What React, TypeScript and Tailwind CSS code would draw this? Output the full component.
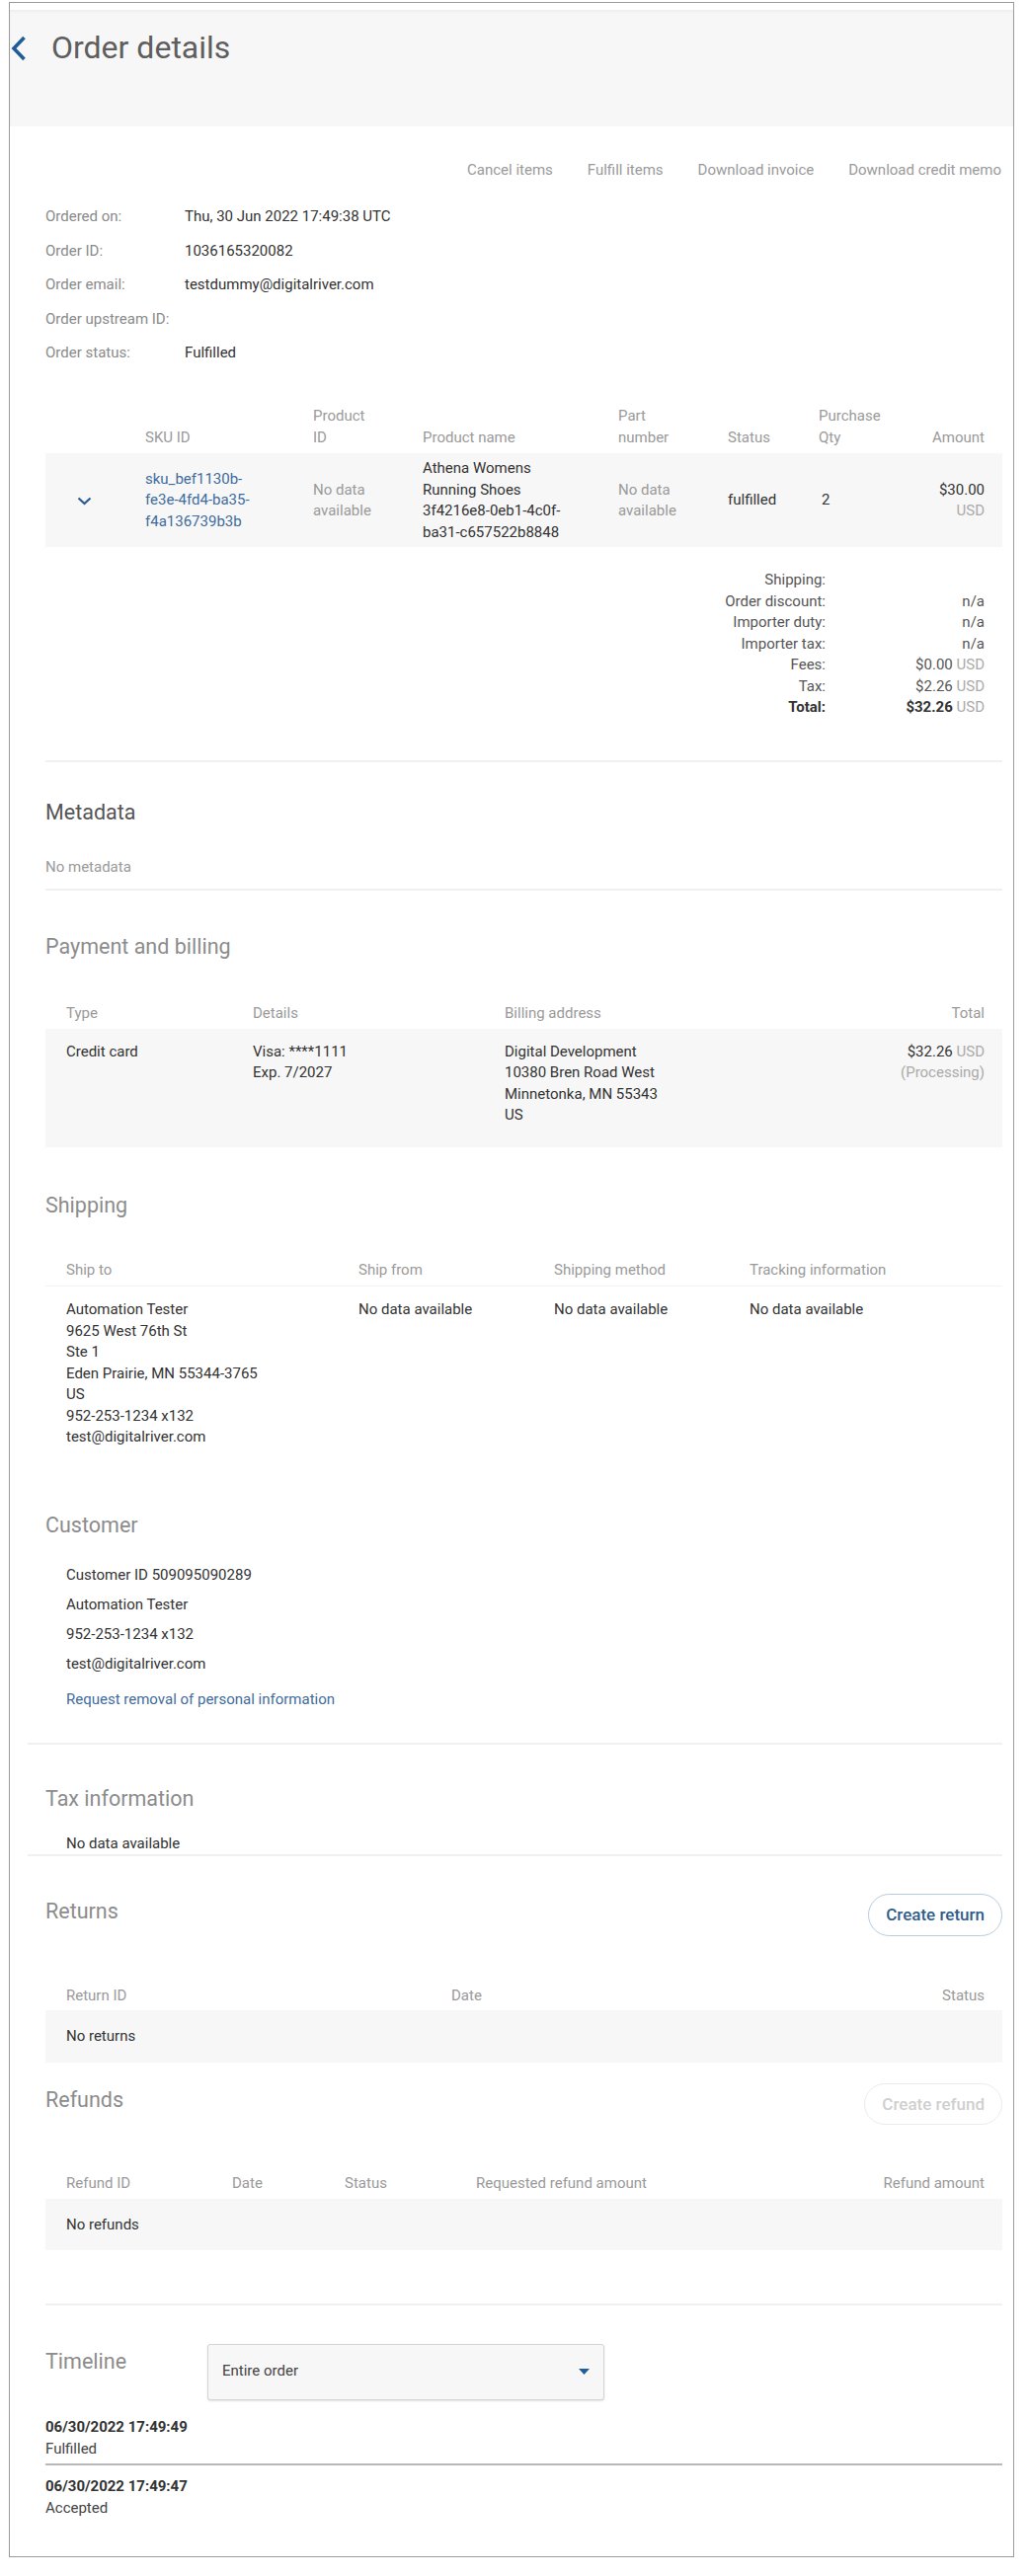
import React from 'react';

const font = { fontFamily: 'Roboto, "Liberation Sans", Arial, sans-serif' };

function Heading({ children, dark }: { children: React.ReactNode; dark?: boolean }) {
  return (
    <div className={`text-[21.5px] leading-[28px] ${dark ? 'text-[#555]' : 'text-[#8c8c8c]'}`}>{children}</div>
  );
}

function Divider({ wide, className = '' }: { wide?: boolean; className?: string }) {
  return <div className={`h-[2px] bg-[#f0f0f0] ${wide ? '-ml-[18px]' : ''} ${className}`} />;
}

function PillButton({ children, disabled }: { children: React.ReactNode; disabled?: boolean }) {
  return (
    <button
      type="button"
      className={`rounded-full border px-[17px] text-[17px] font-medium leading-none ${
        disabled
          ? 'h-[42px] border-[#ececec] text-[#cfcfcf]'
          : 'h-[43px] border-[#b7cbdf] text-[#2f5d8b]'
      }`}
    >
      {children}
    </button>
  );
}

const info: [string, string][] = [
  ['Ordered on:', 'Thu, 30 Jun 2022 17:49:38 UTC'],
  ['Order ID:', '1036165320082'],
  ['Order email:', 'testdummy@digitalriver.com'],
  ['Order upstream ID:', ''],
  ['Order status:', 'Fulfilled'],
];

const totals: [string, React.ReactNode][] = [
  ['Shipping:', ''],
  ['Order discount:', 'n/a'],
  ['Importer duty:', 'n/a'],
  ['Importer tax:', 'n/a'],
  ['Fees:', <>$0.00 <span className="text-[#aaa]">USD</span></>],
  ['Tax:', <>$2.26 <span className="text-[#aaa]">USD</span></>],
];

const itemCols = 'grid grid-cols-[101px_170px_111px_198px_111px_92px_1fr_auto]';

export default function App() {
  return (
    <div className="min-h-[2609px] w-[1041px] bg-white pt-[2px]" style={font}>
      <div className="ml-[9px] w-[1018px] border border-[#9c9c9c]">
        {/* page header */}
        <div className="mt-[7px] h-[118px] bg-[#f7f7f7] shadow-[inset_0_2px_3px_rgba(0,0,0,0.04)]">
          <div className="flex items-center pt-[18px]">
            <svg width="18" height="26" viewBox="0 0 18 26" className="mt-[2px]">
              <path d="M14.5 2 L4 13 L14.5 24" fill="none" stroke="#1f5c98" strokeWidth="3.6" />
            </svg>
            <h1 className="ml-[24px] text-[32px] leading-[40px] text-[#5e5e5e]">Order details</h1>
          </div>
        </div>

        <div className="pl-[36px] pr-[11px] text-[15px] leading-[21.5px] text-[#333]">
          {/* actions */}
          <div className="flex justify-end gap-[35px] pr-[1px] pt-[34px] text-[#9a9a9a]">
            <span>Cancel items</span>
            <span>Fulfill items</span>
            <span>Download invoice</span>
            <span>Download credit memo</span>
          </div>

          {/* order info */}
          <div className="mt-[19px]">
            {info.map(([k, v]) => (
              <div key={k} className="flex h-[34.5px] items-center">
                <span className="w-[141px] text-[#8a8a8a]">{k}</span>
                <span>{v}</span>
              </div>
            ))}
          </div>

          {/* line items */}
          <div className={`${itemCols} mt-[36px] items-end pb-[5px] text-[#9a9a9a]`}>
            <span />
            <span>SKU ID</span>
            <span>Product<br />ID</span>
            <span>Product name</span>
            <span>Part<br />number</span>
            <span>Status</span>
            <span>Purchase<br />Qty</span>
            <span className="pr-[18px] text-right">Amount</span>
          </div>
          <div className={`${itemCols} items-center bg-[#f7f7f7] pb-[4px] pt-[5px]`}>
            <span className="flex pl-[32px]">
              <svg width="15" height="9" viewBox="0 0 15 9">
                <path d="M1.5 1.5 L7.5 7 L13.5 1.5" fill="none" stroke="#2a5e93" strokeWidth="2.2" />
              </svg>
            </span>
            <span className="text-[#3f6c9c]">
              sku_bef1130b-<br />fe3e-4fd4-ba35-<br />f4a136739b3b
            </span>
            <span className="text-[#9a9a9a]">No data<br />available</span>
            <span>
              Athena Womens<br />Running Shoes<br />3f4216e8-0eb1-4c0f-<br />ba31-c657522b8848
            </span>
            <span className="text-[#9a9a9a]">No data<br />available</span>
            <span>fulfilled</span>
            <span className="pl-[3px]">2</span>
            <span className="pr-[18px] text-right">
              $30.00<br /><span className="text-[#aaa]">USD</span>
            </span>
          </div>

          {/* totals */}
          <div className="mt-[23px] grid grid-cols-[1fr_179px] text-right text-[#555]">
            {totals.map(([k, v]) => (
              <React.Fragment key={k}>
                <span>{k}</span>
                <span className="pr-[18px]">{v}</span>
              </React.Fragment>
            ))}
            <span className="font-bold text-[#333]">Total:</span>
            <span className="pr-[18px]">
              <span className="font-bold text-[#333]">$32.26</span> <span className="text-[#aaa]">USD</span>
            </span>
          </div>

          <Divider className="mt-[42px]" />

          {/* metadata */}
          <div className="mt-[37px]">
            <Heading dark>Metadata</Heading>
          </div>
          <div className="mt-[31.5px] text-[#9a9a9a]">No metadata</div>
          <Divider className="mt-[10px]" />

          {/* payment */}
          <div className="mt-[43.5px]">
            <Heading>Payment and billing</Heading>
          </div>
          <div className="mt-[42.5px] grid grid-cols-[189px_255px_1fr_auto] pb-[4.5px] pl-[21px] pr-[18px] text-[#9a9a9a]">
            <span>Type</span>
            <span>Details</span>
            <span>Billing address</span>
            <span className="text-right">Total</span>
          </div>
          <div className="grid grid-cols-[189px_255px_1fr_auto] bg-[#f7f7f7] pb-[21px] pl-[21px] pr-[18px] pt-[13px]">
            <span>Credit card</span>
            <span>Visa: ****1111<br />Exp. 7/2027</span>
            <span>Digital Development<br />10380 Bren Road West<br />Minnetonka, MN 55343<br />US</span>
            <span className="text-right">
              $32.26 <span className="text-[#aaa]">USD</span>
              <br />
              <span className="text-[#aaa]">(Processing)</span>
            </span>
          </div>

          {/* shipping */}
          <div className="mt-[45px]">
            <Heading>Shipping</Heading>
          </div>
          <div className="mt-[41.5px] grid grid-cols-[296px_198px_198px_1fr] border-b border-[#f2f2f2] pb-[4.5px] pl-[21px] text-[#9a9a9a]">
            <span>Ship to</span>
            <span>Ship from</span>
            <span>Shipping method</span>
            <span>Tracking information</span>
          </div>
          <div className="grid grid-cols-[296px_198px_198px_1fr] pl-[21px] pt-[13px]">
            <span>
              Automation Tester<br />9625 West 76th St<br />Ste 1<br />Eden Prairie, MN 55344-3765<br />US<br />
              952-253-1234 x132<br />test@digitalriver.com
            </span>
            <span>No data available</span>
            <span>No data available</span>
            <span>No data available</span>
          </div>

          {/* customer */}
          <div className="mt-[64px]">
            <Heading>Customer</Heading>
          </div>
          <div className="mt-[26.5px] flex flex-col gap-[8.5px] pl-[21px]">
            <span>Customer ID 509095090289</span>
            <span>Automation Tester</span>
            <span>952-253-1234 x132</span>
            <span>test@digitalriver.com</span>
            <span className="mt-[5.5px] text-[#3f6c9c]">Request removal of personal information</span>
          </div>
          <Divider wide className="mt-[33px]" />

          {/* tax */}
          <div className="mt-[41px]">
            <Heading>Tax information</Heading>
          </div>
          <div className="mt-[20.5px] pl-[21px]">No data available</div>
          <Divider wide />

          {/* returns */}
          <div className="mt-[38px] flex items-start justify-between">
            <div className="mt-[4px]">
              <Heading>Returns</Heading>
            </div>
            <PillButton>Create return</PillButton>
          </div>
          <div className="mt-[49.5px] grid grid-cols-[390px_1fr_auto] pb-[3.5px] pl-[21px] pr-[18px] text-[#9a9a9a]">
            <span>Return ID</span>
            <span>Date</span>
            <span className="text-right">Status</span>
          </div>
          <div className="bg-[#f7f7f7] pb-[15.5px] pl-[21px] pt-[16px]">No returns</div>

          {/* refunds */}
          <div className="mt-[21.5px] flex items-start justify-between">
            <div className="mt-[3px]">
              <Heading>Refunds</Heading>
            </div>
            <PillButton disabled>Create refund</PillButton>
          </div>
          <div className="mt-[48.5px] grid grid-cols-[168px_114px_133px_1fr_auto] pb-[4.5px] pl-[21px] pr-[18px] text-[#9a9a9a]">
            <span>Refund ID</span>
            <span>Date</span>
            <span>Status</span>
            <span>Requested refund amount</span>
            <span className="text-right">Refund amount</span>
          </div>
          <div className="bg-[#f7f7f7] pb-[14.5px] pl-[21px] pt-[16.5px]">No refunds</div>

          <Divider className="mt-[54px]" />

          {/* timeline */}
          <div className="mt-[38.5px] flex items-start">
            <div className="mt-[4px] w-[164px]">
              <Heading>Timeline</Heading>
            </div>
            <div className="flex h-[57px] w-[402px] items-center justify-between rounded-[3px] border border-[#d4d4d4] bg-[#f7f7f7] pl-[14px] pr-[14px] shadow-[0_1px_2px_rgba(0,0,0,0.12)]">
              <span className="text-[#444]">Entire order</span>
              <svg width="11" height="6" viewBox="0 0 11 6">
                <path d="M0 0 L11 0 L5.5 6 Z" fill="#1f5f9a" />
              </svg>
            </div>
          </div>
          <div className="mt-[17.5px] pb-[4px]">
            <div className="font-bold">06/30/2022 17:49:49</div>
            <div className="text-[#444]">Fulfilled</div>
          </div>
          <div className="h-[2px] bg-[#b9b9b9]" />
          <div className="pb-[38px] pt-[11px]">
            <div className="font-bold">06/30/2022 17:49:47</div>
            <div className="text-[#444]">Accepted</div>
          </div>
        </div>
      </div>
    </div>
  );
}
